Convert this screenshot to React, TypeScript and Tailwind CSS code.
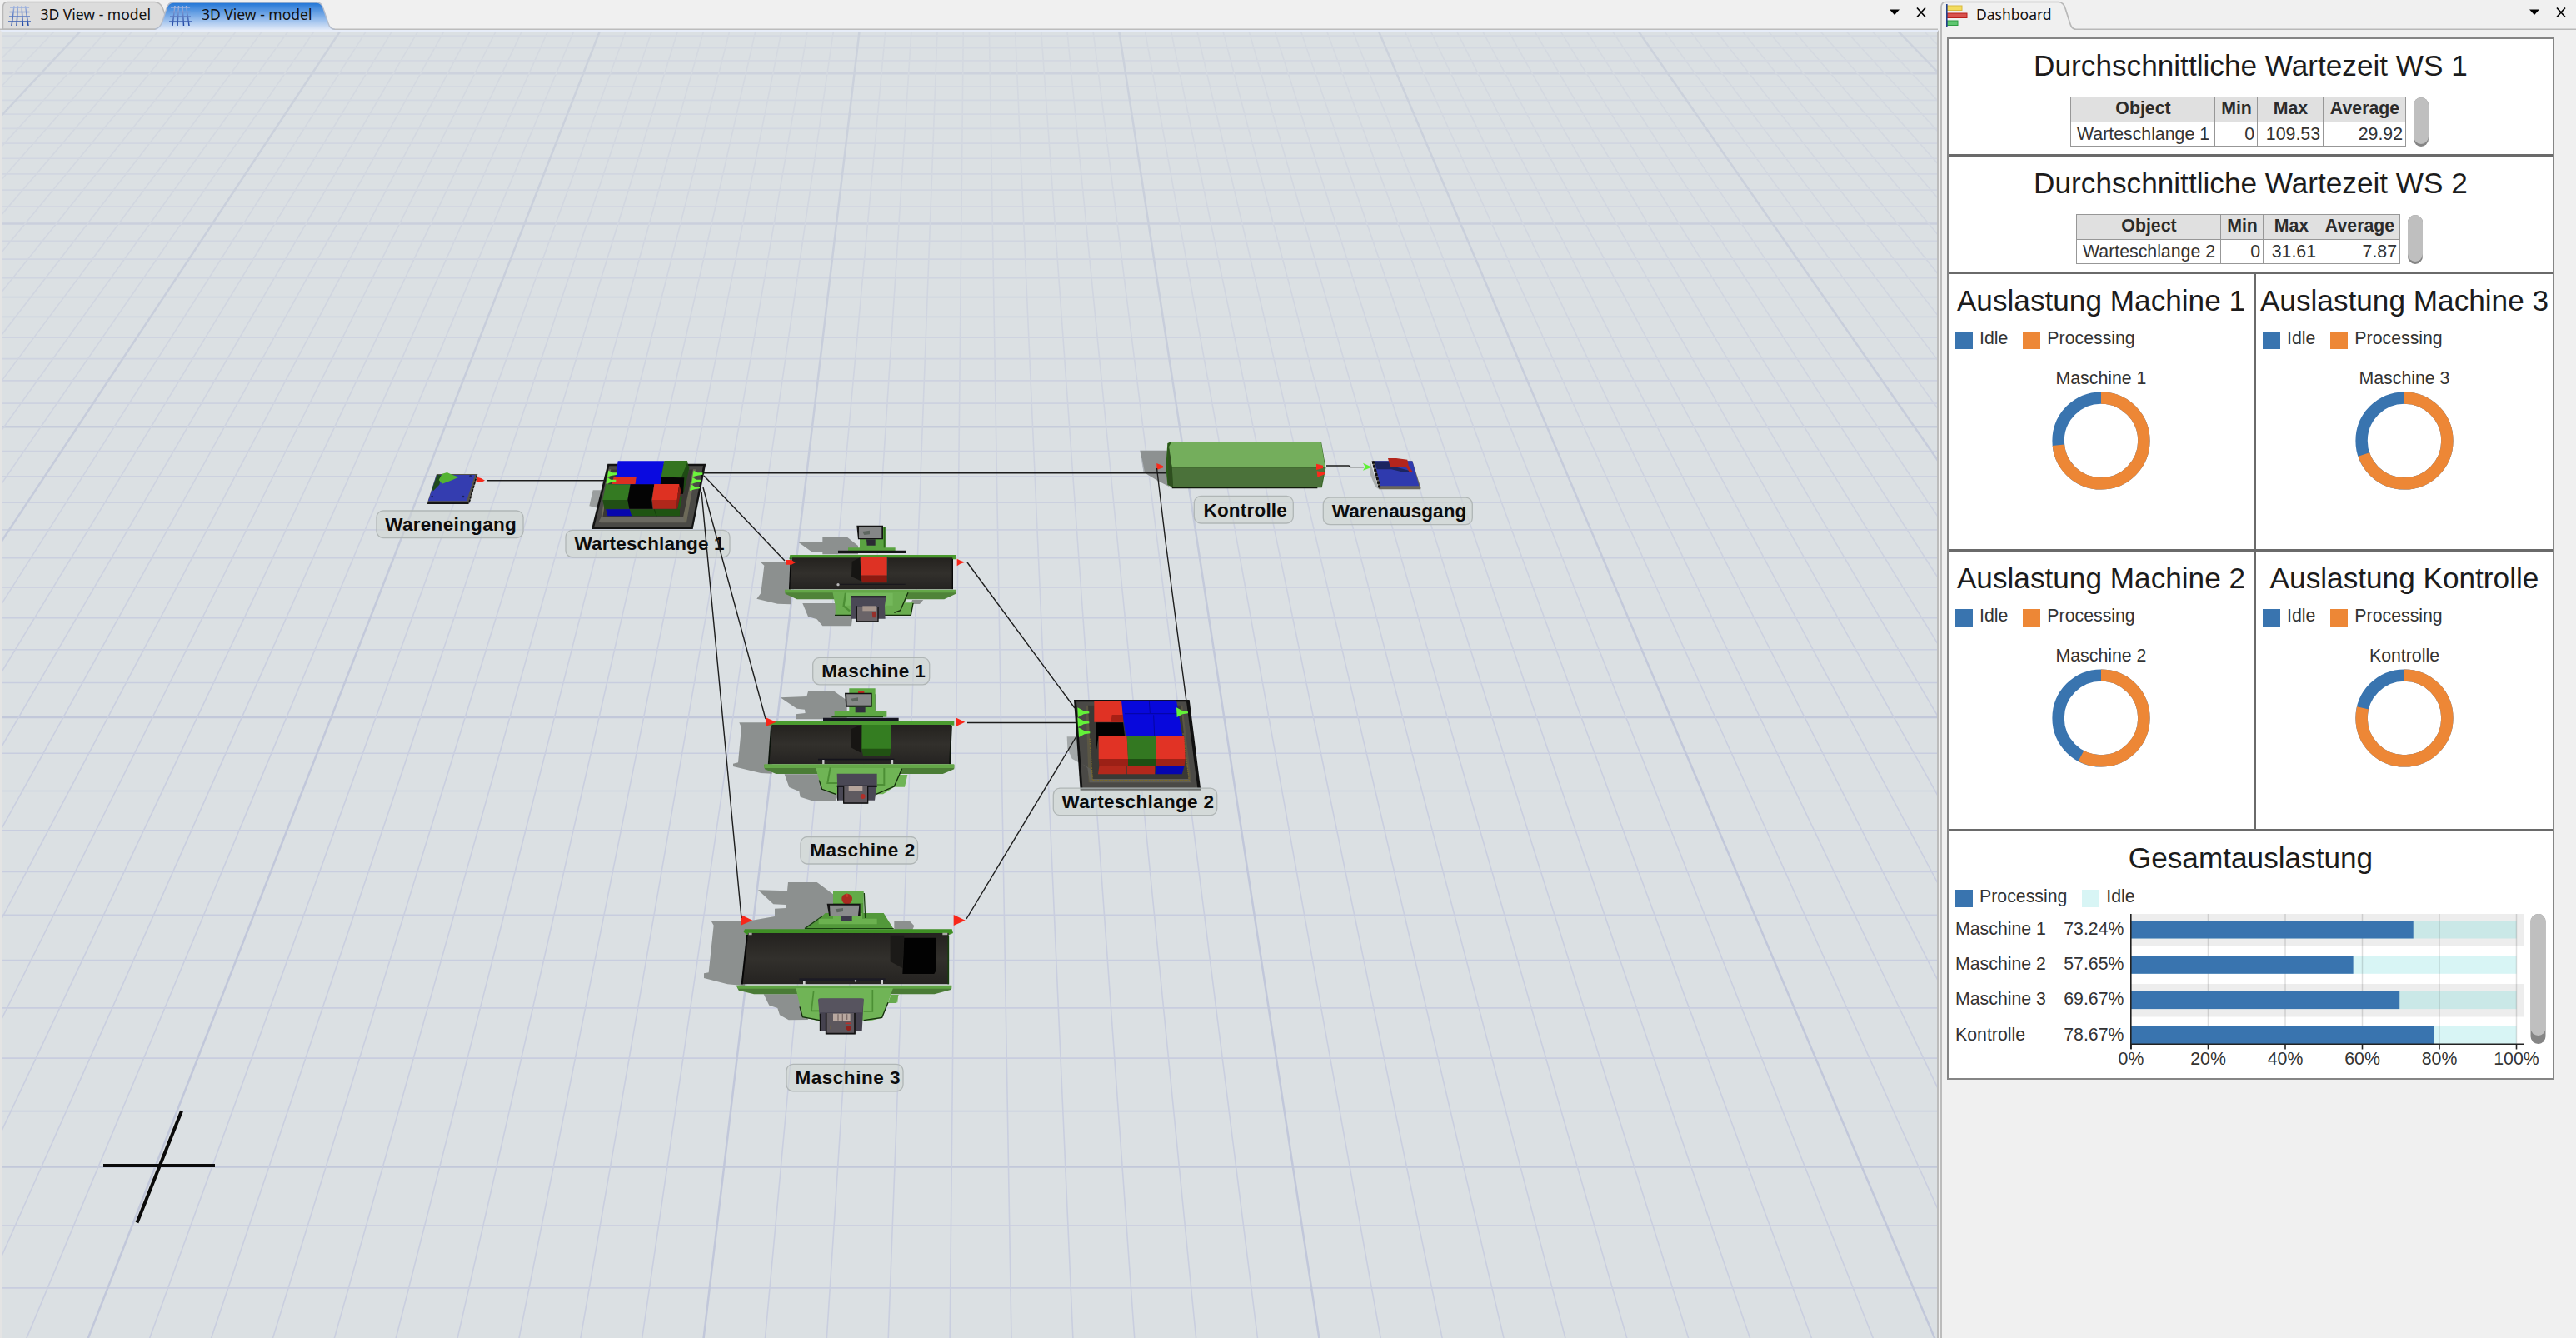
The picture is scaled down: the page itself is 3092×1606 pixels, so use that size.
import React from "react";

const HORIZON_Y = -1107;
const VANISH_X = 1168;

/* Floor grid: y = (a + b*k) / (1 + c*k), k counted in major steps. */
function FloorGrid() {
  const lines: React.ReactNode[] = [];
  for (let i = -26; i <= 24; i++) {
    const k = i / 10;
    const y = (512.3 + 196.4 * k) / (1 - 0.17685 * k);
    if (y < 36 || y > 1610) continue;
    const major = i % 10 === 0;
    const near = Math.max(0, Math.min(1, y / 800));
    lines.push(
      <line
        key={`h${i}`}
        x1={0}
        x2={2330}
        y1={y}
        y2={y}
        stroke={major ? "#c2c8da" : "#c8cddf"}
        strokeWidth={major ? 2.6 : 1.7}
        opacity={major ? 0.5 + 0.5 * near : 0.35 + 0.6 * near}
      />
    );
  }
  for (let i = -50; i <= 50; i++) {
    const slope = -0.1192 + i * 0.02723;
    const major = i % 10 === 0;
    lines.push(
      <line
        key={`v${i}`}
        x1={VANISH_X + slope * (30 - HORIZON_Y)}
        y1={30}
        x2={VANISH_X + slope * (1610 - HORIZON_Y)}
        y2={1610}
        stroke={major ? "url(#fadeMajor)" : "url(#fade)"}
        strokeWidth={major ? 2.5 : 1.6}
      />
    );
  }
  return <g>{lines}</g>;
}

type LabelProps = { x: number; y: number; w: number; tx: number; tw: number; base: number; text: string };

function SceneLabel({ x, y, w, tx, tw, base, text }: LabelProps) {
  return (
    <g>
      <rect x={x} y={y} width={w} height={32.5} rx={8} fill="#cdd3cf" fillOpacity={0.5} stroke="#b0b6b6" strokeWidth={1.3} />
      <text x={tx - 0.5} y={base} textLength={tw + 2} fontFamily='"Liberation Sans", Arial, sans-serif' fontWeight={700} fontSize={22.5} fill="#0c0c0c">
        {text}
      </text>
    </g>
  );
}

const labels: LabelProps[] = [
  { x: 452, y: 613, w: 176, tx: 462.7, tw: 155.6, base: 637, text: "Wareneingang" },
  { x: 679, y: 636.3, w: 197, tx: 690, tw: 178, base: 660, text: "Warteschlange 1" },
  { x: 975.7, y: 789.3, w: 140, tx: 986.7, tw: 122.6, base: 813.3, text: "Maschine 1" },
  { x: 961, y: 1004.5, w: 140.5, tx: 972.7, tw: 124, base: 1028.3, text: "Maschine 2" },
  { x: 944, y: 1277.3, w: 140, tx: 955, tw: 124, base: 1301, text: "Maschine 3" },
  { x: 1264.3, y: 946.2, w: 196.4, tx: 1275, tw: 180.5, base: 970, text: "Warteschlange 2" },
  { x: 1433.3, y: 595.5, w: 119, tx: 1445, tw: 98.3, base: 619.5, text: "Kontrolle" },
  { x: 1588.3, y: 597.2, w: 179, tx: 1599.3, tw: 159.5, base: 621, text: "Warenausgang" },
];

const P = ({ d, f }: { d: string; f: string }) => <path d={d} fill={f} />;

function Source() {
  return (
    <g transform="translate(440 500) scale(.33333)">
      <P d="M252 207H400L370 313H218Z" f="#57544b" />
      <P d="M222 308H366L368 315H218Z" f="#151515" />
      <P d="M252 210H390L360 304H222Z" f="#343db0" />
      <path d="M397 212L370 306" stroke="#111" strokeWidth="5" strokeDasharray="8 5" />
      <P d="M254 209L270 212L262 245L240 268L236 262Z" f="#1f4a1c" />
      <P d="M260 228L272 206L290 201L304 208L332 218L300 232L272 242Z" f="#53b332" />
      <circle cx="236" cy="288" r="4" fill="#1d2460" />
      <circle cx="348" cy="288" r="4" fill="#1d2460" />
      <circle cx="374" cy="214" r="4" fill="#1d2460" />
      <P d="M398 218L412 222L426 230L412 237L394 236Z" f="#f8281a" />
    </g>
  );
}

function QueueOne() {
  return (
    <g transform="translate(440 500) scale(.33333)">
      <P d="M815 265H850L835 330L802 322Z" f="#9a9e9e" />
      <P d="M868 170H1222L1175 405H810Z" f="#131313" />
      <P d="M874 178H1212L1170 397H820Z" f="#4a4946" />
      <P d="M872 190H1186L1152 382H842Z" f="#6c6958" />
      <P d="M880 190H1176L1140 362H850Z" f="#3a3834" />
      <P d="M846 360H1140L1146 378H836Z" f="#6b6961" />
      <P d="M905 160H1072L1060 245H893Z" f="#0a0ae0" />
      <P d="M1072 159H1155L1160 200L1142 222H1060Z" f="#347420" />
      <P d="M1155 165L1162 185L1150 240L1142 275L1125 240Z" f="#1e4a14" />
      <P d="M890 217H972L968 243H884Z" f="#dd2f22" />
      <P d="M972 216H1062L1056 245H968Z" f="#0a0ae0" />
      <P d="M1062 218L1144 220L1140 278L1120 280L1058 244Z" f="#050505" />
      <P d="M862 244H950L940 300H850Z" f="#347a22" />
      <P d="M850 300H940L946 332H856Z" f="#214f14" />
      <P d="M950 244H1036L1026 300L1030 332H946L940 300Z" f="#040404" />
      <P d="M1036 243H1126L1118 300H1028Z" f="#de3122" />
      <P d="M1028 300H1118L1116 332H1032Z" f="#b0271b" />
      <P d="M1126 243L1132 268L1120 330L1116 332L1118 300Z" f="#8d1c13" />
      <P d="M1132 280L1136 292L1128 334L1120 332Z" f="#215c14" />
      <P d="M862 334H948L955 358H868Z" f="#0707ae" />
      <P d="M948 334H1128V358H955Z" f="#1f5412" />
      <path d="M1036 334L1044 358" stroke="#143a0c" strokeWidth="3" />
      {[[865, 206], [860, 231], [1172, 206], [1168, 231], [1162, 256]].map(([x, y]) => (
        <P key={`${x}-${y}`} d={`M${x + 6} ${y - 12}L${x + 20} ${y - 4}H${x + 38}V${y + 3}L${x + 20} ${y + 6}L${x + 2} ${y + 11}Z`} f="#6cf53c" />
      ))}
    </g>
  );
}

function QueueTwo() {
  return (
    <g transform="translate(1240 800) scale(.33333)">
      <P d="M122 253H165L172 350L140 332L124 295Z" f="#a3a8a9" />
      <P d="M147 120H563L604 446H170Z" f="#101010" />
      <P d="M156 127H552L592 438H178Z" f="#4a4946" />
      <P d="M190 140H538L570 418H200Z" f="#5a5644" />
      <P d="M198 140H532L560 408H212Z" f="#3a3935" />
      <P d="M176 350L212 372L214 405H560L572 418H204L196 366Z" f="#5f5e58" />
      <path d="M204 260L214 410H562L540 240" stroke="#7a6a2c" strokeWidth="4" strokeDasharray="5 3" fill="none" />
      <P d="M220 123H320L325 200H220Z" f="#e03224" />
      <P d="M284 174H324V200H280Z" f="#a82015" />
      <P d="M318 122H516L538 252H334L324 180Z" f="#0808dc" />
      <path d="M330 170H520M418 124L421 168M434 175L437 250" stroke="#0505a0" strokeWidth="3" fill="none" />
      <P d="M226 202H324L330 250H236L228 300Z" f="#020202" />
      <P d="M236 252H338L342 333H236Z" f="#e13325" />
      <P d="M236 333H342V357H238Z" f="#9c2016" />
      <P d="M338 252H442V333H342Z" f="#337821" />
      <P d="M342 333H442V357H342Z" f="#1e4f13" />
      <P d="M442 252H544L548 333H444Z" f="#e13325" />
      <P d="M444 333H548L545 357H444Z" f="#a02217" />
      <P d="M238 360H336V388H234Z" f="#b3281c" />
      <P d="M338 360H438V388H338Z" f="#b3281c" />
      <P d="M442 360H544L536 388H440Z" f="#0606b0" />
      {[[160, 166], [160, 202], [163, 238], [516, 166]].map(([x, y]) => (
        <P key={`${x}-${y}`} d={`M${x} ${y - 18}L${x + 22} ${y - 6}L${x + 42} ${y - 3}V${y + 3}L${x + 22} ${y + 6}L${x + 2} ${y + 17}Z`} f="#63f238" />
      ))}
    </g>
  );
}

function ControlBlock() {
  return (
    <g transform="translate(1340 500) scale(.33333)">
      <P d="M85 122H190V252L150 232L98 200Z" f="#8d9191" />
      <path d="M90 150L100 200H186" stroke="#bfc4d0" strokeWidth="4" fill="none" opacity=".6" />
      <P d="M196 91H738L754 185L740 256H202L184 245L178 180L184 96Z" f="#2a5c17" />
      <P d="M198 92H737L752 183H200L188 110Z" f="#74ae5c" />
      <P d="M200 184H752L738 253H204Z" f="#4b723a" />
      <P d="M188 98L200 184L204 254L186 244Z" f="#2f4f20" />
      <path d="M200 257H724" stroke="#101a0a" strokeWidth="4" />
      <P d="M145 168L168 178V184L145 192Z" f="#fa2a1b" />
      <P d="M720 170L744 176V186L720 192Z" f="#fa2a1b" />
      <P d="M722 196L750 202V208L724 218Z" f="#fa2a1b" />
    </g>
  );
}

function Sink() {
  return (
    <g transform="translate(1340 500) scale(.33333)">
      <P d="M915 165L945 262L932 252L915 210Z" f="#a9aeae" />
      <P d="M920 160H1066L1096 256V262H946Z" f="#6b675c" />
      <P d="M928 160H1066L1090 250H950Z" f="#2f3aae" />
      <P d="M930 161H985L1000 180L1060 196L1040 202L990 190H938Z" f="#1c2560" />
      <path d="M924 160L948 256" stroke="#111" strokeWidth="9" strokeDasharray="10 5" />
      <P d="M978 150H1008L1048 155L1052 176L1068 200H1056L1044 182L986 180Z" f="#b3251c" />
      <P d="M888 167L904 175L920 182L904 188L888 194L896 181Z" f="#5df034" />
    </g>
  );
}

function MachineOne() {
  return (
    <g transform="translate(860 600) scale(.33333)">
      <P d="M295 152L382 150V135H472L510 165V196H382V186L345 188ZM160 225H268V376L220 374L145 356L160 336L172 236ZM310 372H430L490 420L486 454H382L362 430L330 420ZM705 360H745L732 375H700Z" f="#8c908f" />
      <P d="M516 98H608V172H644V184H474V172H516Z" f="#5aa341" />
      <P d="M602 98H608V172H602Z" f="#2b6a18" />
      <P d="M438 182H682V192H438Z" f="#151518" />
      <P d="M505 92H600V142H510Z" f="#131313" />
      <P d="M513 98H595V138H513Z" f="#858787" />
      <P d="M526 114L552 110V124L532 126Z" f="#5d665f" />
      <P d="M540 142H572V164H542Z" f="#2b2a33" />
      <P d="M265 198H862V214H262Z" f="#4a9a2e" />
      <P d="M272 208H850V322H262Z" f="url(#belt)" />
      <P d="M488 222L520 206V292L486 276Z" f="#161513" />
      <path d="M268 208L263 322M850 212V322" stroke="#080808" strokeWidth="4" />
      <path d="M440 304H680" stroke="#17161c" strokeWidth="3" />
      <circle cx="438" cy="305" r="5" fill="#b8b8b8" />
      <P d="M518 204H617V298H520Z" f="#1a3a34" />
      <P d="M518 204H614V272H520Z" f="#de3224" />
      <P d="M520 272H614V298H524Z" f="#8c1a11" />
      <P d="M246 325H862V338L820 358H290L248 338Z" f="#4f8338" />
      <P d="M246 323H862V334H246Z" f="#64a748" />
      <P d="M418 330H692L678 370H710L700 416H428V380Z" f="#6aad50" />
      <path d="M690 334L662 398L640 406M426 415H700L708 372" stroke="#132d0b" strokeWidth="4" fill="none" />
      <P d="M465 335H635V380H455Z" f="#74b85b" />
      <path d="M465 335L458 382L480 400" stroke="#4c8f35" strokeWidth="7" fill="none" />
      <P d="M484 346H611L606 382L608 428H484Z" f="#4a4855" />
      <P d="M484 346H611V352H484Z" f="#1b1a22" />
      <P d="M505 384H582V438H505Z" f="#6a6468" />
      <P d="M526 382H574V400H526Z" f="#a5958c" />
      <path d="M505 382V438H582V384" stroke="#111" strokeWidth="4" fill="none" />
      <P d="M560 402H574V424H562Z" f="#96302b" />
      <P d="M250 216H270L284 226L270 233H252Z" f="#f8271a" />
      <P d="M866 212L878 218L895 224L878 230L866 238Z" f="#f8271a" />
    </g>
  );
}

function MachineTwo() {
  return (
    <g transform="translate(860 810) scale(.33333)">
      <P d="M230 82L325 78L330 60H425L470 92V160H285V142L320 138L318 125L290 122ZM82 172H200V356L160 354L60 330V320L78 316L90 190ZM245 358H370L440 430L430 454H345L302 440L298 420L262 405Z" f="#8c908f" />
      <P d="M478 49H572V130H613V152H425V130H478Z" f="#5ea844" />
      <path d="M574 70V128M415 152H600" stroke="#1a4710" strokeWidth="4" />
      <P d="M384 155H656V166H384Z" f="#151520" />
      <P d="M510 59H532V68H510Z" f="#c22a20" />
      <P d="M462 65H560V116H466Z" f="#121212" />
      <P d="M468 70H556V110H470Z" f="#888a8a" />
      <P d="M484 86L510 82V94L490 97Z" f="#5d665f" />
      <P d="M500 116H536V136H500Z" f="#312f3d" />
      <P d="M184 166H856V182H182Z" f="#4b9b30" />
      <P d="M200 180H844V322H188Z" f="url(#belt)" />
      <P d="M486 195L522 180V282L484 262Z" f="#171513" />
      <path d="M198 182L188 322M846 184L840 322" stroke="#0a120a" strokeWidth="5" />
      <path d="M366 305H640" stroke="#15141c" strokeWidth="5" />
      <path d="M385 306V324M633 306V324" stroke="#c8c8c8" strokeWidth="7" />
      <P d="M524 180H630V270L624 292H528L522 265Z" f="#215213" />
      <P d="M524 180H630V266H524Z" f="#347d21" />
      <P d="M172 324H856V340L815 357H215L174 340Z" f="#4b7d36" />
      <P d="M172 322H856V336H172Z" f="#64a748" />
      <P d="M358 336H668L656 360H688L678 404H640L600 430H420L380 410L370 380Z" f="#6fb455" />
      <path d="M668 338L640 402L575 430M370 380L380 412L430 430" stroke="#132d0b" strokeWidth="4" fill="none" />
      <path d="M410 334L400 390H436M604 336V396H578" stroke="#4c8f35" strokeWidth="6" fill="none" />
      <P d="M434 356H578V396L570 452H437Z" f="#4a4855" />
      <P d="M434 398H578V405H434Z" f="#18171d" />
      <P d="M458 402H545V464H458Z" f="#5f5a60" />
      <P d="M476 402H526V420H476Z" f="#b5a49b" />
      <path d="M458 402V462H545V402M437 404V452" stroke="#111" strokeWidth="4" fill="none" />
      <circle cx="527" cy="438" r="9" fill="#b0302a" />
      <P d="M178 154L215 170L178 186Z" f="#f8271a" />
      <P d="M864 155L895 170L864 185Z" f="#f8271a" />
    </g>
  );
}

function MachineThree() {
  return (
    <g transform="translate(820 1040) scale(.33333)">
      <P d="M270 85L375 88L378 57H482L540 100V230H240L222 430L160 424L75 402V385L92 382L110 212L102 198L240 196L330 180V152L370 150V138L325 136ZM290 460H420L450 552L380 553L348 535L340 510L310 500ZM760 196H815L832 214L826 228H760Z" f="#8c908f" />
      <P d="M512 168H540V88H650V168H722L758 226H438L490 190Z" f="#52983a" />
      <path d="M652 96L656 186M438 224L500 180M758 224H438" stroke="#18400f" strokeWidth="4" fill="none" />
      <P d="M540 88H648V132H540Z" f="#62ab48" />
      <P d="M488 188H540V168H645V188H698V208H488Z" f="#6bb14f" />
      <circle cx="590" cy="117" r="19" fill="#a92b20" />
      <path d="M590 98V110" stroke="#c93a2d" strokeWidth="7" />
      <P d="M518 134H638V180H526Z" f="#141414" />
      <P d="M528 140H634L630 177H530Z" f="#8a8c8c" />
      <P d="M548 154L576 150V162L554 166Z" f="#5d665f" />
      <P d="M568 180H608V196H568Z" f="#3c394a" />
      <P d="M222 226H968L972 240L958 246H230L218 236Z" f="#3f8f25" />
      <P d="M234 240H956V424H210Z" f="url(#belt)" />
      <path d="M231 246L212 424" stroke="#060606" strokeWidth="6" />
      <path d="M955 248V424" stroke="#173e0d" strokeWidth="5" />
      <path d="M236 243H248M934 243H952" stroke="#a9a9a4" strokeWidth="7" />
      <P d="M746 248H796L790 366L746 342Z" f="#1b1a18" />
      <P d="M796 257H909V378L904 387H790Z" f="#020202" />
      <path d="M418 407H728" stroke="#1c1b25" strokeWidth="8" />
      <path d="M436 412V426M716 408V424" stroke="#cfcfcf" strokeWidth="8" />
      <circle cx="621" cy="412" r="4" fill="#b8b8b8" />
      <P d="M192 430H967L964 444L905 460H255L200 446Z" f="#4a7b36" />
      <P d="M192 428H967V440H198Z" f="#5fa444" />
      <P d="M406 438H756L738 490H772L774 462L768 492H736L716 545L680 554H480L430 542Z" f="#70b456" />
      <P d="M748 462H776L768 492H738Z" f="#66aa4c" />
      <path d="M420 505L430 542L492 554M738 490L716 544L650 554" stroke="#132d0b" strokeWidth="4" fill="none" />
      <path d="M470 448L462 520H490M682 444V522H650" stroke="#4c8f35" strokeWidth="5" fill="none" />
      <P d="M488 476H650L644 594H494Z" f="#45424f" />
      <P d="M486 480Q488 474 498 475H640Q652 474 650 482L645 526H490Z" f="#57545f" />
      <P d="M515 528H620V604H515Z" f="#5c575d" />
      <P d="M540 530H602V556H540Z" f="#b8a8a0" />
      <path d="M558 532V554M574 530V556M590 532V552" stroke="#7c6c68" strokeWidth="4" />
      <path d="M515 528V602H618V528M494 530V594" stroke="#121212" strokeWidth="5" fill="none" />
      <circle cx="596" cy="582" r="9" fill="#8f211c" />
      <path d="M584 565H604" stroke="#b8302a" strokeWidth="5" />
      <path d="M532 572V586" stroke="#7c6b33" strokeWidth="4" />
      <P d="M208 174L250 194L208 212Z" f="#f8271a" />
      <P d="M974 174L1016 194L974 213Z" f="#f8271a" />
    </g>
  );
}

function Scene() {
  return (
    <svg className="block h-full w-full" viewBox="3 39 2322 1567" preserveAspectRatio="none">
      <defs>
        <linearGradient id="fade" gradientUnits="userSpaceOnUse" x1="0" y1="39" x2="0" y2="900">
          <stop offset="0" stopColor="#d4d9e0" />
          <stop offset="1" stopColor="#c9cedf" />
        </linearGradient>
        <linearGradient id="fadeMajor" gradientUnits="userSpaceOnUse" x1="0" y1="39" x2="0" y2="900">
          <stop offset="0" stopColor="#ccd2dc" />
          <stop offset="1" stopColor="#c1c7da" />
        </linearGradient>
        <linearGradient id="belt" x1="0" y1="0" x2="0" y2="1">
          <stop offset="0" stopColor="#24221f" />
          <stop offset="0.5" stopColor="#32302c" />
          <stop offset="1" stopColor="#252321" />
        </linearGradient>
      </defs>
      <rect x="3" y="39" width="2323" height="1567" fill="#dbe0e3" />
      <FloorGrid />
      <path d="M124 1399H258M218 1333.5L164.500 1467.5" stroke="#0a0a0a" strokeWidth="4" />
      <Source />
      <QueueOne />
      <ControlBlock />
      <Sink />
      <MachineOne />
      <MachineTwo />
      <MachineThree />
      <QueueTwo />
      {labels.map((l) => (
        <SceneLabel key={l.text} {...l} />
      ))}
      <g stroke="#1c1c1c" strokeWidth="1.4" fill="none">
        <path d="M584 576.7H726" />
        <path d="M845 567.7H1400" />
        <path d="M845 571L942 673" />
        <path d="M844 585L919 863" />
        <path d="M842 590L890 1102" />
        <path d="M1161 675L1290 850" />
        <path d="M1161 867.5H1292" />
        <path d="M1160 1103L1292 884" />
        <path d="M1424 842L1399 650L1388.5 562" />
        <path d="M1592 559H1619L1621 560.6H1637" />
      </g>
    </svg>
  );
}

function GridIcon() {
  return (
    <svg className="block h-[27px] w-[27px]" viewBox="0 0 27 27" fill="none">
      <defs>
        <linearGradient id="gi" gradientUnits="userSpaceOnUse" x1="0" y1="0" x2="0" y2="27">
          <stop offset="0" stopColor="#b9c8e8" />
          <stop offset="0.55" stopColor="#5878c0" />
          <stop offset="1" stopColor="#173f9f" />
        </linearGradient>
      </defs>
      <path
        d="M2 4H25.1M1.500 9.5H25.500M1 15H26M0 21.1H27M7 2L4 26M11.5 2L10 26M16 2L17.500 26M20.500 2L24 26"
        stroke="url(#gi)"
        strokeWidth="1.5"
      />
    </svg>
  );
}

function BarIcon() {
  return (
    <svg className="block h-[28px] w-[26px]" viewBox="0 0 26 28">
      <rect x="1" y="2" width="18" height="5.500" fill="#f3dc5e" stroke="#d8b93c" />
      <rect x="1" y="11" width="24" height="5.500" fill="#d9524e" stroke="#b8201c" />
      <rect x="1" y="20" width="13" height="5.500" fill="#5fc670" stroke="#2e9c42" />
      <rect x="0" y="0" width="1.600" height="28" fill="#23408c" />
    </svg>
  );
}

function WindowControls() {
  return (
    <svg className="block h-[14px] w-[44px]" viewBox="0 0 44 14">
      <path d="M0 3.500H12L6 10Z" fill="#000" />
      <path d="M33 1.500L43 12.500M43 1.500L33 12.500" stroke="#000" strokeWidth="1.700" />
    </svg>
  );
}

function Legend({ items }: { items: { color: string; name: string }[] }) {
  return (
    <div className="flex h-6 gap-[18px] pl-2">
      {items.map((i) => (
        <div key={i.name} className="flex gap-2">
          <span className="mt-1 h-[21px] w-[21px]" style={{ backgroundColor: i.color }} />
          <span className="text-[21.3px] leading-6 text-[#333]">{i.name}</span>
        </div>
      ))}
    </div>
  );
}

function Title({ children }: { children: React.ReactNode }) {
  return <h2 className="whitespace-nowrap text-center text-[35.2px] leading-10 text-[#1c1c1c]">{children}</h2>;
}

function Scroll() {
  return (
    <div className="mt-px h-[59px] w-[18px] rounded-full bg-[#858585]">
      <div className="h-[56px] rounded-full bg-[#bfbfbf]" />
    </div>
  );
}

function WaitTable({ cols, row }: { cols: string[]; row: string[] }) {
  const heads = ["Object", "Min", "Max", "Average"];
  return (
    <div className="mt-[17px] flex justify-center gap-[9px] pr-[3px]">
      <table className="table-fixed border-collapse text-[21.3px] leading-6">
        <thead>
          <tr className="h-[30px] bg-[#e0e0e0]">
            {heads.map((h, i) => (
              <th key={h} className={`${cols[i]} border border-[#979797] p-0 text-center font-bold text-[#2b2b2b]`}>
                <div className="-mt-[3px] pl-px">{h}</div>
              </th>
            ))}
          </tr>
        </thead>
        <tbody>
          <tr className="h-[29px]">
            {row.map((v, i) => (
              <td key={i} className={`border border-[#979797] p-0 text-[#333] ${i === 0 ? "pl-px text-center" : "pr-[3px] text-right"}`}>
                <div className="h-6 leading-[25px]">{v}</div>
              </td>
            ))}
          </tr>
        </tbody>
      </table>
      <Scroll />
    </div>
  );
}

function Donut({ share }: { share: number }) {
  const r = 51.4;
  const len = 2 * Math.PI * r;
  return (
    <svg className="mx-auto mt-1 block h-[118px] w-[118px]" viewBox="0 0 118 118" fill="none">
      <g transform="rotate(-90 59 59)" strokeWidth="14.4">
        <circle cx="59" cy="59" r={r} stroke="#3974af" />
        <circle cx="59" cy="59" r={r} stroke="#ed8736" strokeDasharray={`${len * share} ${len}`} />
      </g>
    </svg>
  );
}

function PiePanel({ title, name, share, className }: { title: string; name: string; share: number; className: string }) {
  return (
    <section className={`${className} bg-white pt-[11.5px]`}>
      <Title>{title}</Title>
      <div className="mt-[13px]">
        <Legend
          items={[
            { color: "#3974af", name: "Idle" },
            { color: "#ed8736", name: "Processing" },
          ]}
        />
      </div>
      <div className="mt-6 text-center text-[21.3px] leading-6 text-[#333]">{name}</div>
      <Donut share={share} />
    </section>
  );
}

const machines = [
  { name: "Maschine 1", v: 73.24 },
  { name: "Maschine 2", v: 57.65 },
  { name: "Maschine 3", v: 69.67 },
  { name: "Kontrolle", v: 78.67 },
];

function UtilisationChart() {
  const x0 = 2558;
  const w = 462.5;
  return (
    <svg
      className="block h-[204px] w-[725px]"
      viewBox="2339 1088 725 204"
      fontFamily='"Liberation Sans", Arial, sans-serif'
      fontSize="21.3"
      fill="#333"
    >
      <rect x={x0} y="1097" width="471" height="39" fill="#ededed" />
      <rect x={x0} y="1181" width="471" height="39.500" fill="#ededed" />
      {machines.map((m, i) => {
        const y = 1105 + i * 42.3;
        return (
          <g key={m.name}>
            <rect x={x0} y={y} width={w} height="21.500" fill={i % 2 ? "#d8f5f5" : "#cae8e7"} />
            <text x="2347" y={1121.7 + i * 42.3}>{m.name}</text>
            <text x="2549.500" y={1121.7 + i * 42.3} textAnchor="end">{m.v.toFixed(2)}%</text>
          </g>
        );
      })}
      {[1, 2, 3, 4, 5].map((t) => (
        <line key={t} x1={x0 + t * 92.5} x2={x0 + t * 92.5} y1="1097" y2="1253" stroke="#000" strokeOpacity=".13" strokeWidth="1.500" />
      ))}
      {machines.map((m, i) => (
        <rect key={m.name} x={x0} y={1105 + i * 42.3} width={(w * m.v) / 100} height="21.500" fill="#3974af" />
      ))}
      <path d="M2557.800 1097V1259M2557 1253.300H3029" stroke="#222" strokeWidth="1.600" fill="none" />
      {[0, 1, 2, 3, 4, 5].map((t) => (
        <g key={t}>
          <line x1={x0 + t * 92.5} x2={x0 + t * 92.5} y1="1253" y2="1259.500" stroke="#222" strokeWidth="1.600" />
          <text x={x0 + t * 92.5} y="1278.300" textAnchor="middle">{t * 20}%</text>
        </g>
      ))}
      <rect x="3037.500" y="1097" width="18" height="156" rx="9" fill="#858585" />
      <rect x="3037.500" y="1097" width="18" height="146" rx="9" fill="#bfbfbf" />
    </svg>
  );
}

const tabText = "font-['Noto_Sans',sans-serif] text-[17.5px] leading-6 text-[#111] whitespace-nowrap";

export default function App() {
  return (
    <div className="flex h-[1606px] w-[3092px] overflow-hidden bg-[#f0f0f0] font-['Liberation_Sans',Arial,sans-serif]">
      <div className="flex w-[2329px] flex-col">
        <div className="relative flex h-9 items-start">
          <svg className="absolute left-0 top-0 h-9 w-[2329px]" viewBox="0 0 2329 36">
            <defs>
              <linearGradient id="tab" x1="0" y1="0" x2="0" y2="1">
                <stop offset="0" stopColor="#1f74d6" />
                <stop offset="0.5" stopColor="#7eaee8" />
                <stop offset="1" stopColor="#e2eaf8" />
              </linearGradient>
            </defs>
            <path d="M0 35.300H2326" stroke="#bcbcbc" strokeWidth="1.700" />
            <path d="M3.500 35V8Q4 2.500 9 2.500H186Q192 3 195 9L204 35Z" fill="#dcdcdc" stroke="#b8b8b8" strokeWidth="1.500" />
            <path d="M186 36Q192 34 195 26L200 10Q202 3 208 3H380Q386 3 388 10L394 28Q396 35 402 36Z" fill="url(#tab)" />
            <path d="M186 35Q192 34 195 26L200 10Q202 3 208 3H380Q386 3 388 10L394 28Q396 35 402 35.300" fill="none" stroke="#b4bccb" strokeWidth="1.300" />
          </svg>
          <div className="relative flex w-[194px] gap-3 pl-[9.5px] pt-[5px]">
            <GridIcon />
            <span className={tabText}>3D View - model</span>
          </div>
          <div className="relative flex w-[200px] gap-3 pl-[9px] pt-[5px]">
            <GridIcon />
            <span className={tabText}>3D View - model</span>
          </div>
          <div className="relative ml-auto mr-[17px] pt-2">
            <WindowControls />
          </div>
        </div>
        <div className="flex h-[1570px] w-[2329px] border-r-2 border-[#f0f0f0]">
          <div className="h-full w-full border-l-[3px] border-r-2 border-t-[3px] border-l-[#e4e4e4] border-r-[#bcbcbc] border-t-[#e6ecf8]">
            <Scene />
          </div>
        </div>
      </div>

      <div className="flex w-[763px] flex-col">
        <div className="relative flex h-9 items-start">
          <svg className="absolute left-0 top-0 h-9 w-[763px]" viewBox="0 0 763 36">
            <path d="M1 36V8Q1.500 2.500 7 2.500H142Q148 3 150 10L156 29Q158 35.300 163 35.300H763" fill="none" stroke="#b8b8b8" strokeWidth="1.700" />
          </svg>
          <div className="relative flex gap-[10px] pl-[7px] pt-[5px]">
            <BarIcon />
            <span className={tabText}>Dashboard</span>
          </div>
          <div className="relative ml-auto mr-[12px] pt-2">
            <WindowControls />
          </div>
        </div>
        <div className="flex-1 border-l-2 border-[#bcbcbc] pl-[6px] pt-[9px]">
          <div className="h-[1251px] w-[729px] border-2 border-[#858585] bg-white">
            <section className="h-[141px] border-b-[3px] border-[#6a6a6a] pt-3">
              <Title>Durchschnittliche Wartezeit WS 1</Title>
              <WaitTable cols={["w-[173px]", "w-[51px]", "w-[79px]", "w-[99px]"]} row={["Warteschlange 1", "0", "109.53", "29.92"]} />
            </section>
            <section className="h-[141px] border-b-[3px] border-[#6a6a6a] pt-3">
              <Title>Durchschnittliche Wartezeit WS 2</Title>
              <WaitTable cols={["w-[173px]", "w-[51px]", "w-[67px]", "w-[97px]"]} row={["Warteschlange 2", "0", "31.61", "7.87"]} />
            </section>
            <div className="flex h-[333px] border-b-[3px] border-[#6a6a6a]">
              <PiePanel className="w-[369px] border-r-[3px] border-[#6a6a6a]" title="Auslastung Machine 1" name="Maschine 1" share={0.7324} />
              <PiePanel className="w-[356px]" title="Auslastung Machine 3" name="Maschine 3" share={0.6967} />
            </div>
            <div className="flex h-[336px] border-b-[3px] border-[#6a6a6a]">
              <PiePanel className="w-[369px] border-r-[3px] border-[#6a6a6a]" title="Auslastung Machine 2" name="Maschine 2" share={0.5765} />
              <PiePanel className="w-[356px]" title="Auslastung Kontrolle" name="Kontrolle" share={0.7867} />
            </div>
            <section className="pt-3">
              <Title>Gesamtauslastung</Title>
              <div className="mt-[14px]">
                <Legend
                  items={[
                    { color: "#3974af", name: "Processing" },
                    { color: "#d8f5f5", name: "Idle" },
                  ]}
                />
              </div>
              <UtilisationChart />
            </section>
          </div>
        </div>
      </div>
    </div>
  );
}
